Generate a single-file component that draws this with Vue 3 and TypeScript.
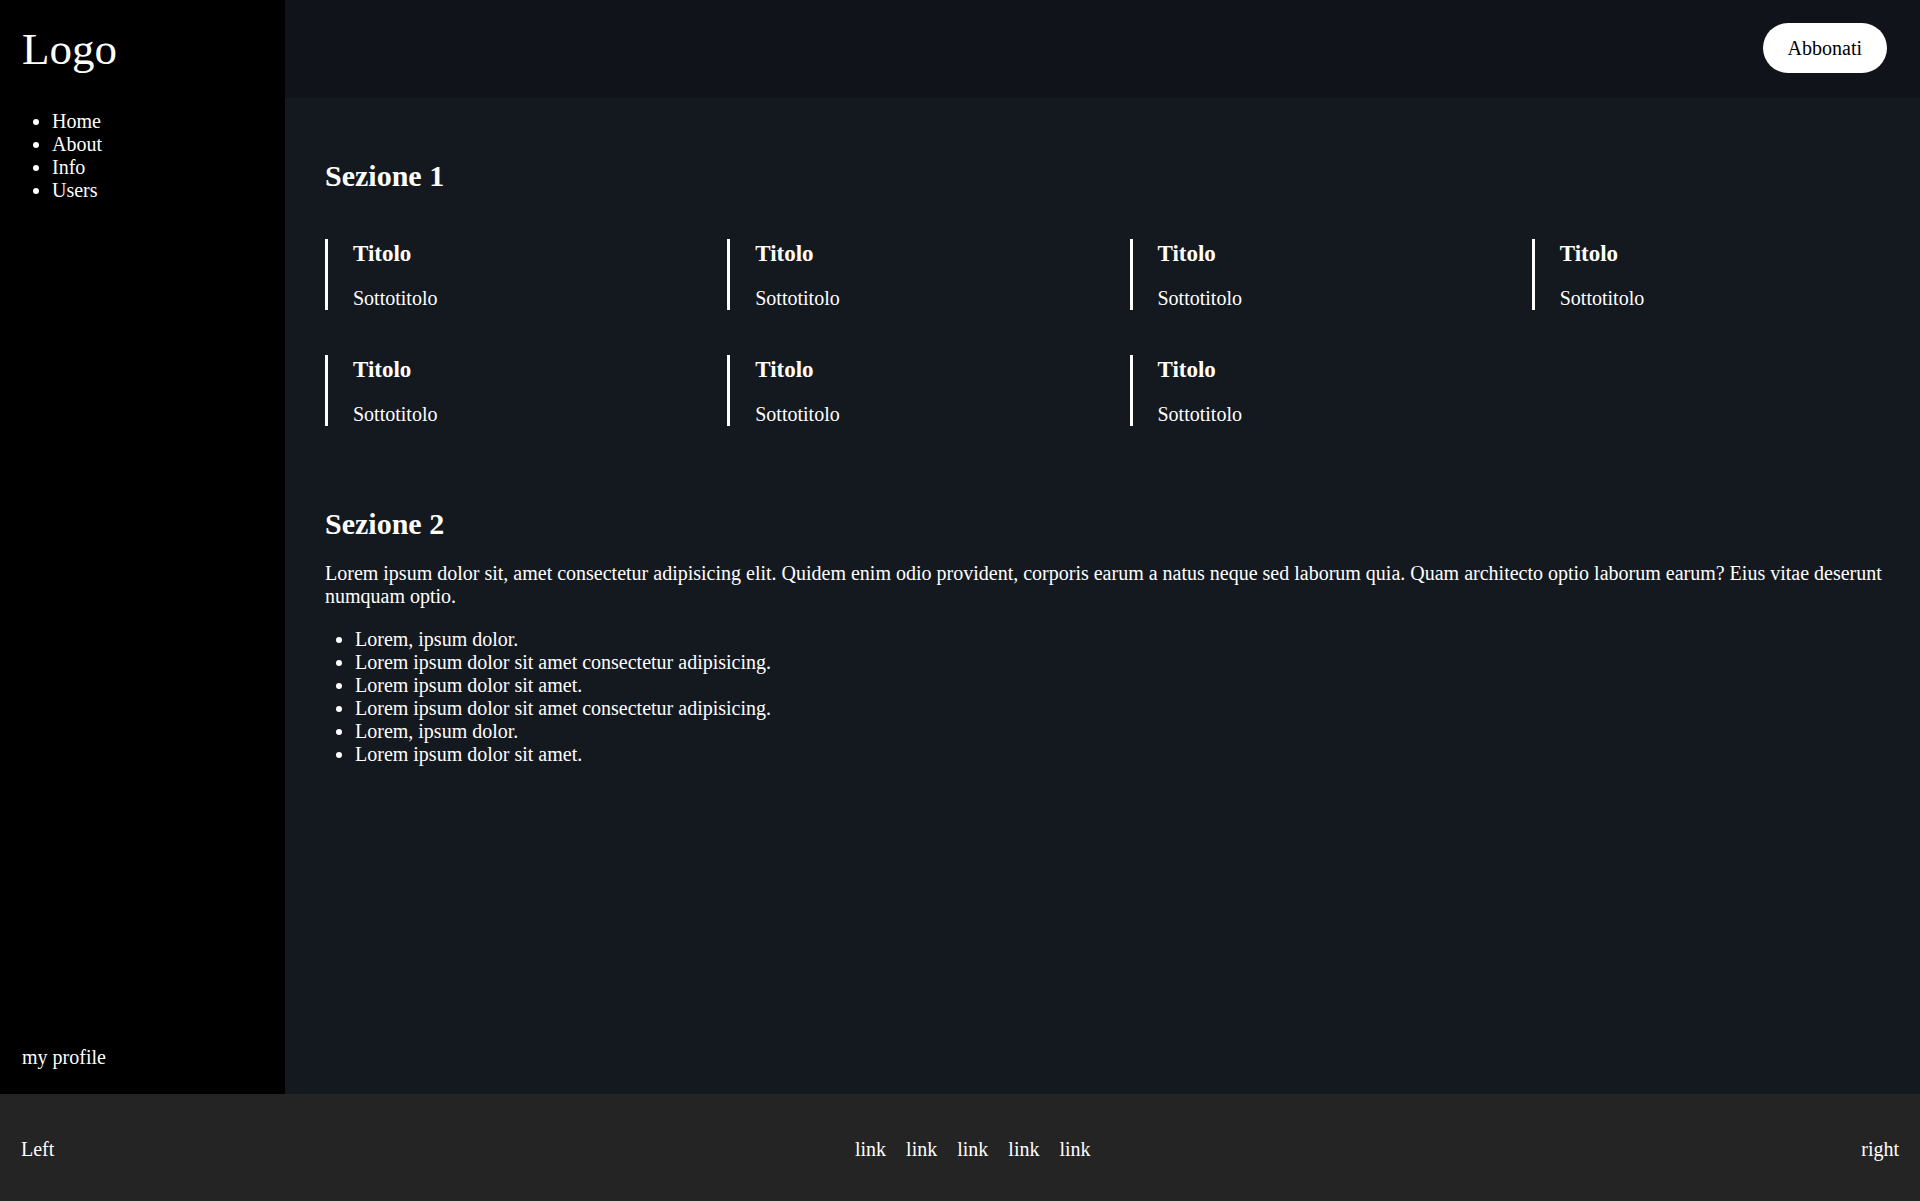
<script setup lang="ts">
interface Card {
  id: number
  title: string
  subtitle: string
}

const menu: string[] = ['Home', 'About', 'Info', 'Users']

const cards: Card[] = Array.from({ length: 7 }, (_, id) => ({
  id,
  title: 'Titolo',
  subtitle: 'Sottotitolo',
}))

const items: string[] = [
  'Lorem, ipsum dolor.',
  'Lorem ipsum dolor sit amet consectetur adipisicing.',
  'Lorem ipsum dolor sit amet.',
  'Lorem ipsum dolor sit amet consectetur adipisicing.',
  'Lorem, ipsum dolor.',
  'Lorem ipsum dolor sit amet.',
]

const footerLinks = 5
</script>

<template>
  <div class="page">
    <div class="body">
      <aside class="sidebar">
        <div class="logo">Logo</div>
        <nav>
          <ul class="list">
            <li v-for="entry in menu" :key="entry"><a href="#">{{ entry }}</a></li>
          </ul>
        </nav>
        <a class="profile" href="#">my profile</a>
      </aside>

      <div class="content">
        <header class="topbar">
          <button class="subscribe" type="button">Abbonati</button>
        </header>

        <main class="main">
          <section>
            <h2>Sezione 1</h2>
            <div class="cards">
              <article v-for="card in cards" :key="card.id" class="card">
                <h3>{{ card.title }}</h3>
                <p>{{ card.subtitle }}</p>
              </article>
            </div>
          </section>

          <section>
            <h2>Sezione 2</h2>
            <p>
              Lorem ipsum dolor sit, amet consectetur adipisicing elit. Quidem enim odio provident,
              corporis earum a natus neque sed laborum quia. Quam architecto optio laborum earum?
              Eius vitae deserunt numquam optio.
            </p>
            <ul class="list items">
              <li v-for="(item, i) in items" :key="i">{{ item }}</li>
            </ul>
          </section>
        </main>
      </div>
    </div>

    <footer class="footer">
      <div>Left</div>
      <ul class="links">
        <li v-for="n in footerLinks" :key="n"><a href="#">link</a></li>
      </ul>
      <div>right</div>
    </footer>
  </div>
</template>

<style>
body {
  margin: 0;
  background: #14191f;
}
</style>

<style scoped>
.page {
  display: flex;
  flex-direction: column;
  min-height: 100vh;
  font-family: "Liberation Serif", "Times New Roman", serif;
  font-size: 20px;
  line-height: 23px;
  color: #fff;
}

a {
  color: inherit;
  text-decoration: none;
}

h2,
h3,
p,
ul {
  margin: 0;
}

h2 {
  margin-bottom: 21px;
  font-size: 30px;
  line-height: 35px;
}

h3 {
  font-size: 23px;
  line-height: 29px;
}

.list {
  padding-left: 30px;
}

.items {
  margin-top: 20px;
}

.body {
  display: flex;
  flex: 1;
}

.sidebar {
  display: flex;
  flex-direction: column;
  flex: none;
  box-sizing: border-box;
  width: 285px;
  padding: 23px 22px 25px;
  background: #000;
}

.logo {
  margin-bottom: 35px;
  font-size: 45px;
  line-height: 52px;
}

.profile {
  margin-top: auto;
}

.content {
  flex: 1;
  min-width: 0;
  background: #14191f;
}

.topbar {
  display: flex;
  justify-content: flex-end;
  padding: 23px 33px 25px;
  background: #10131a;
}

.subscribe {
  height: 50px;
  padding: 0 25px;
  border: 0;
  border-radius: 25px;
  background: #fff;
  color: #000;
  font: inherit;
  cursor: pointer;
}

.main {
  display: flex;
  flex-direction: column;
  gap: 80px;
  padding: 60px 26px 60px 40px;
}

.cards {
  display: grid;
  grid-template-columns: repeat(4, 1fr);
  gap: 45px 40px;
  margin-top: 46px;
}

.card {
  display: flex;
  flex-direction: column;
  gap: 19px;
  padding-left: 25px;
  border-left: 3px solid #fff;
}

.footer {
  display: flex;
  justify-content: space-between;
  padding: 44px 21px 40px;
  background: #242424;
}

.links {
  display: flex;
  gap: 20px;
  padding-left: 30px;
  list-style: none;
}
</style>
